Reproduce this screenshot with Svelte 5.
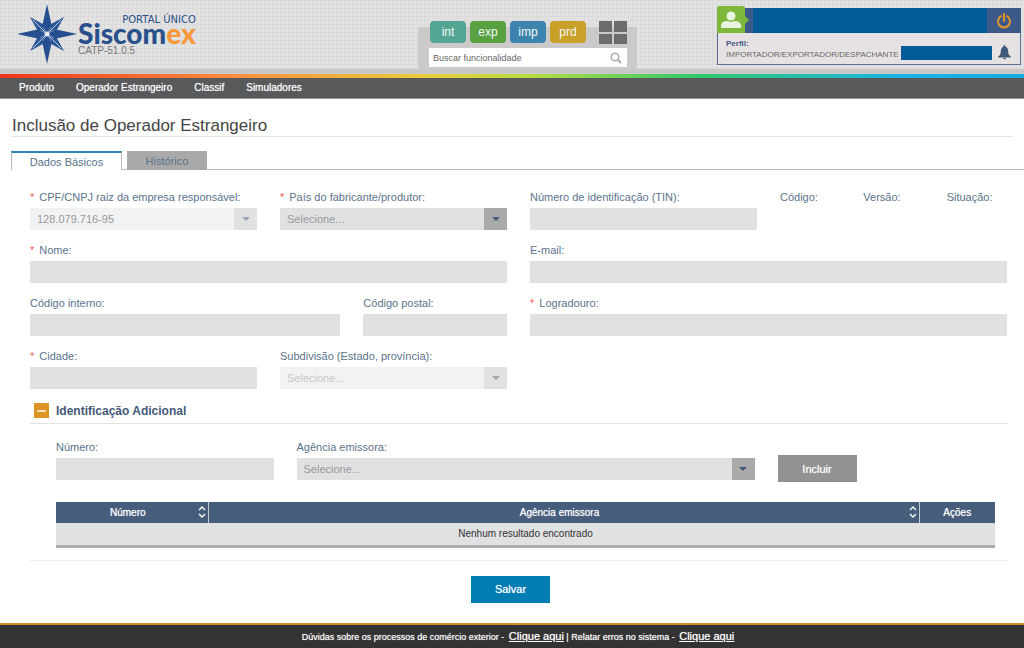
<script lang="ts">
  type Field = {
    id: string;
    label: string;
    span: number;
    required?: boolean;
    kind?: 'text' | 'select' | 'output';
    value?: string;
    disabled?: boolean;
  };

  const menu = ['Produto', 'Operador Estrangeiro', 'Classif', 'Simuladores'];
  const modules = ['int', 'exp', 'imp', 'prd'];

  const fields: Field[] = [
    {
      id: 'cpf-cnpj',
      label: 'CPF/CNPJ raiz da empresa responsável:',
      span: 3,
      required: true,
      kind: 'select',
      value: '128.079.716-95',
      disabled: true,
    },
    { id: 'pais', label: 'País do fabricante/produtor:', span: 3, required: true, kind: 'select' },
    { id: 'tin', label: 'Número de identificação (TIN):', span: 3 },
    { id: 'codigo', label: 'Código:', span: 1, kind: 'output' },
    { id: 'versao', label: 'Versão:', span: 1, kind: 'output' },
    { id: 'situacao', label: 'Situação:', span: 1, kind: 'output' },
    { id: 'nome', label: 'Nome:', span: 6, required: true },
    { id: 'email', label: 'E-mail:', span: 6 },
    { id: 'codigo-interno', label: 'Código interno:', span: 4 },
    { id: 'codigo-postal', label: 'Código postal:', span: 2 },
    { id: 'logradouro', label: 'Logradouro:', span: 6, required: true },
    { id: 'cidade', label: 'Cidade:', span: 3, required: true },
    {
      id: 'subdivisao',
      label: 'Subdivisão (Estado, província):',
      span: 3,
      kind: 'select',
      disabled: true,
    },
  ];

  const extraFields: Field[] = [
    { id: 'numero', label: 'Número:', span: 3 },
    { id: 'agencia', label: 'Agência emissora:', span: 6, kind: 'select' },
  ];

  let expanded = $state(true);
</script>

{#snippet formField(field: Field)}
  <div class="field span-{field.span}">
    <label for={field.id}>
      {#if field.required}<span class="required">*</span>{/if}{field.label}
    </label>
    {#if field.kind === 'select'}
      <div class="select" class:disabled={field.disabled}>
        <select id={field.id} disabled={field.disabled}>
          <option>{field.value ?? 'Selecione...'}</option>
        </select>
        <span class="arrow"></span>
      </div>
    {:else if field.kind === 'output'}
      <output id={field.id}></output>
    {:else}
      <input id={field.id} type="text" />
    {/if}
  </div>
{/snippet}

{#snippet sortIcon()}
  <svg class="sort" viewBox="0 0 8 14" width="8" height="14" aria-hidden="true">
    <path d="M1 5 4 2l3 3M1 9l3 3 3-3" fill="none" stroke="currentColor" stroke-width="1.4" />
  </svg>
{/snippet}

<div class="page">
  <header>
    <div class="brand">
      <svg class="star" viewBox="-29 -30 58 60" width="58" height="60" aria-hidden="true">
        <g>
          {#each [45, 135, 225, 315] as angle}
            <g transform="rotate({angle})">
              <path d="M0-24-5-7 0 0 5-7Z" fill="#2c5798" />
              <path d="M0-20V-3" stroke="#c3cfe0" stroke-width=".9" />
            </g>
          {/each}
        </g>
        <g>
          {#each [0, 90, 180, 270] as angle}
            <g transform="rotate({angle})">
              <path d="M0-30-5-7 0 0 5-7Z" fill="#264f90" />
              <path d="M-4-7 0 0 4-7" fill="none" stroke="#cfd8e6" stroke-width=".5" />
            </g>
          {/each}
        </g>
        <circle r="2.5" fill="#e6ebf2" />
      </svg>
      <div class="wordmark">
        <span class="portal">PORTAL ÚNICO</span>
        <span class="name">Siscom<em>ex</em></span>
        <span class="version">CATP-51.0.5</span>
      </div>
    </div>

    <div class="finder">
      <div class="modules">
        {#each modules as name}
          <button type="button" class="module {name}">{name}</button>
        {/each}
        <button type="button" class="tiles" aria-label="Todos os módulos">
          <svg viewBox="0 0 28 23" width="28" height="23" aria-hidden="true">
            <path d="M0 0h13v11H0zM15 0h13v11H15zM0 13h13v10H0zM15 13h13v10H15z" fill="#6b6c6e" />
          </svg>
        </button>
      </div>
      <div class="search">
        <input type="search" placeholder="Buscar funcionalidade" aria-label="Buscar funcionalidade" />
        <svg viewBox="0 0 12 12" width="12" height="12" aria-hidden="true">
          <circle cx="5" cy="5" r="3.8" fill="none" stroke="#aaa" stroke-width="1.5" />
          <path d="m8 8 2.500 2.500" stroke="#aaa" stroke-width="1.8" stroke-linecap="round" />
        </svg>
      </div>
    </div>

    <div class="user">
      <div class="account">
        <span class="avatar">
          <svg viewBox="0 0 22 18" width="22" height="18" aria-hidden="true">
            <circle cx="11" cy="5" r="4.500" fill="#e9f3dd" />
            <path d="M1 17v-2q0-5 7-5 3 2 6 0 7 0 7 5v2Z" fill="#e9f3dd" />
          </svg>
        </span>
        <span class="mask"></span>
        <button type="button" class="power" aria-label="Sair">
          <svg viewBox="0 0 16 16" width="16" height="16" aria-hidden="true">
            <path
              d="M5 3.200a6 6 0 1 0 6 0M8 1v7"
              fill="none"
              stroke="#e0962c"
              stroke-width="2"
              stroke-linecap="round"
            />
          </svg>
        </button>
      </div>
      <div class="profile">
        <div>
          <strong>Perfil:</strong>
          <span>IMPORTADOR/EXPORTADOR/DESPACHANTE</span>
        </div>
        <span class="mask"></span>
        <svg class="bell" viewBox="0 0 14 16" width="13" height="15" aria-hidden="true">
          <path
            d="M7 0q1 0 1 1.600Q11 3 11 7q0 4 3 5.500V13.500H0V12.500Q3 11 3 7 3 3 6 1.600 6 0 7 0ZM5 14h4q-2 3-4 0Z"
            fill="#3f5877"
          />
        </svg>
      </div>
    </div>
  </header>

  <nav>
    {#each menu as item}
      <a href="#{item}">{item}</a>
    {/each}
  </nav>

  <main>
    <h1>Inclusão de Operador Estrangeiro</h1>

    <div class="tabs" role="tablist">
      <button type="button" role="tab" aria-selected="true" class="active">Dados Básicos</button>
      <button type="button" role="tab" aria-selected="false">Histórico</button>
    </div>

    <form>
      <div class="grid">
        {#each fields as field (field.id)}
          {@render formField(field)}
        {/each}
      </div>

      <section>
        <h2>
          <button
            type="button"
            class="toggle"
            aria-label="Identificação Adicional"
            aria-expanded={expanded}
            onclick={() => (expanded = !expanded)}
          ></button>
          Identificação Adicional
        </h2>

        {#if expanded}
          <div class="extra">
            <div class="grid">
              {#each extraFields as field (field.id)}
                {@render formField(field)}
              {/each}
              <button type="button" class="btn include">Incluir</button>
            </div>

            <table>
              <thead>
                <tr>
                  <th class="col-number">Número {@render sortIcon()}</th>
                  <th>Agência emissora {@render sortIcon()}</th>
                  <th class="col-actions">Ações</th>
                </tr>
              </thead>
              <tbody>
                <tr>
                  <td colspan="3">Nenhum resultado encontrado</td>
                </tr>
              </tbody>
            </table>
          </div>
        {/if}
      </section>

      <div class="actions">
        <button type="button" class="btn save">Salvar</button>
      </div>
    </form>
  </main>

  <footer>
    Dúvidas sobre os processos de comércio exterior -
    <a href="#duvidas">Clique aqui</a> | Relatar erros no sistema -
    <a href="#erros">Clique aqui</a>
  </footer>
</div>

<style>
  :global(body) {
    background: #fff;
  }

  .page {
    display: flex;
    flex-direction: column;
    min-height: 100vh;
    font-family: 'Liberation Sans', Arial, sans-serif;
    font-size: 11px;
    color: #5b738c;
  }

  .page * {
    box-sizing: border-box;
  }

  button,
  input,
  select {
    margin: 0;
    padding: 0;
    border: 0;
    border-radius: 0;
    font: inherit;
    color: inherit;
  }

  button {
    cursor: pointer;
  }

  svg {
    display: block;
  }

  /* Header */
  header {
    display: flex;
    align-items: flex-start;
    height: 74px;
    padding: 0 3px 0 18px;
    border-bottom: 5px solid #c9c7c8;
    background-color: #e3e3e3;
    background-image:
      linear-gradient(#dadada 1px, transparent 1px),
      linear-gradient(90deg, #dadada 1px, transparent 1px);
    background-size: 4px 4px;
  }

  .brand {
    display: flex;
    gap: 2px;
    padding-top: 4px;
  }

  .wordmark {
    display: flex;
    flex-direction: column;
    padding-top: 11px;
    color: #28508c;
  }

  .portal {
    align-self: flex-end;
    font-family: 'DejaVu Sans', sans-serif;
    font-size: 10px;
    line-height: 9px;
  }

  .name {
    font-family: Lato, sans-serif;
    font-size: 28px;
    font-weight: 900;
    line-height: 18px;
  }

  .name em {
    font-style: normal;
    color: #f7993a;
  }

  .version {
    font-size: 10px;
    line-height: 18px;
    color: #777;
  }

  .finder {
    width: 219px;
    height: 42px;
    margin: 27px 80px 0 auto;
    padding: 0 10px 0 11px;
    background: #cbc9ca;
  }

  .modules {
    display: flex;
    gap: 4px;
    margin: -6px 0 4px 1px;
  }

  .module {
    width: 36px;
    height: 22px;
    border-radius: 4px;
    font-size: 12px;
    color: #f4f8f6;
  }

  .int {
    background: #52a693;
  }

  .exp {
    background: #57a143;
  }

  .imp {
    background: #3c84ad;
  }

  .prd {
    background: #c9a028;
  }

  .tiles {
    margin-left: auto;
    background: none;
  }

  .search {
    display: flex;
    align-items: center;
    height: 19px;
    padding: 0 5px 0 4px;
    background: #fff;
  }

  .search input {
    flex: 1;
    min-width: 0;
    background: none;
    font-size: 9px;
    color: #555;
    appearance: none;
  }

  .search input::placeholder {
    color: #666;
  }

  .user {
    width: 304px;
    margin-top: 8px;
    border: 1px solid #5d7097;
    background: #e6e2e4;
  }

  .account {
    display: flex;
    height: 25px;
    margin: -1px -1px 0;
    background: #3c5988;
  }

  .avatar {
    position: relative;
    display: flex;
    align-items: center;
    justify-content: center;
    width: 28px;
    height: 27px;
    margin: -2px 8px 0 0;
    border-radius: 2px 2px 0 0;
    background: #7db83c;
  }

  .avatar::after {
    content: '';
    position: absolute;
    top: 10px;
    left: 100%;
    border: 4px solid transparent;
    border-left-color: #7db83c;
    border-right: 0;
  }

  .mask {
    background: #005b98;
  }

  .account .mask {
    flex: 1;
  }

  .power {
    display: flex;
    align-items: center;
    justify-content: center;
    width: 34px;
    background: none;
  }

  .profile {
    display: flex;
    align-items: flex-end;
    gap: 2px;
    height: 31px;
    padding: 0 9px 4px 8px;
    font-size: 8px;
    line-height: 11px;
  }

  .profile div {
    display: flex;
    flex-direction: column;
  }

  .profile strong {
    color: #3c5988;
  }

  .profile span {
    color: #666;
  }

  .profile .mask {
    flex: 1;
    height: 14px;
  }

  .bell {
    margin-left: 4px;
  }

  nav {
    display: flex;
    gap: 22px;
    padding: 0 19px;
    border-top: 4px solid;
    border-image: linear-gradient(90deg, #f0341a, #f98a3c 22%, #e8cf3c 42%, #b5dc40 52%, #2fc96b 68%, #1bb3e6 88%, #16abe0) 1;
    background: #58595b;
    font-size: 10px;
    line-height: 20px;
  }

  nav a {
    color: #fff;
    text-decoration: none;
  }

  nav,
  th,
  .btn,
  footer {
    text-shadow: 0 0 1px rgb(255 255 255 / 0.7);
  }

  /* Content */
  main {
    flex: 1;
    border-top: 1px solid #999;
  }

  h1 {
    margin: 16px 12px 14px;
    border-bottom: 1px solid #e2e2e2;
    font-size: 17px;
    font-weight: normal;
    line-height: 21px;
    color: #444;
  }

  .tabs {
    display: flex;
    padding-left: 11px;
    background: linear-gradient(#bbb, #bbb) bottom / 100% 1px no-repeat;
    background-position: 122px bottom;
  }

  .tabs button {
    width: 80px;
    height: 19px;
    margin-left: 5px;
    background: #a9a9a9;
  }

  .tabs .active {
    width: 111px;
    margin-left: 0;
    border: 1px solid #bbb;
    border-top: 2px solid #2b86b3;
    border-bottom: 0;
    background: #fff;
  }

  form {
    padding: 16px 17px 20px 30px;
  }

  .grid {
    display: grid;
    grid-template-columns: repeat(12, minmax(0, 1fr));
    gap: 9px 23px;
  }

  .span-1 {
    grid-column: span 1;
  }

  .span-2 {
    grid-column: span 2;
  }

  .span-3 {
    grid-column: span 3;
  }

  .span-4 {
    grid-column: span 4;
  }

  .span-6 {
    grid-column: span 6;
  }

  .field label {
    display: block;
    line-height: 22px;
    white-space: nowrap;
  }

  .required {
    margin-right: 5px;
    color: #f0605c;
  }

  .field input,
  .select {
    display: block;
    width: 100%;
    height: 22px;
    background: #e0e1e3;
  }

  .field input {
    padding: 0 7px;
  }

  .select {
    position: relative;
  }

  .select select {
    width: 100%;
    height: 100%;
    padding: 0 30px 0 7px;
    background: none;
    color: #999;
    opacity: 1;
    appearance: none;
  }

  .arrow {
    position: absolute;
    inset: 0 0 0 auto;
    display: flex;
    align-items: center;
    justify-content: center;
    width: 23px;
    background: #a9a9a9;
    pointer-events: none;
  }

  .arrow::after {
    content: '';
    border: 4px solid transparent;
    border-top-color: #43597a;
    border-bottom: 0;
  }

  .select.disabled {
    background: #f1f2f3;
  }

  .select.disabled .arrow {
    background: #e1e1e1;
  }

  .select.disabled .arrow::after {
    border-top-color: #9aa5b5;
  }

  #subdivisao {
    color: #c8c8c8;
  }

  h2 {
    display: flex;
    align-items: center;
    gap: 7px;
    height: 26px;
    margin: 9px 0 12px;
    padding-left: 4px;
    border-bottom: 1px solid #e2e2e2;
    font-size: 12px;
    color: #43597a;
  }

  .toggle {
    display: flex;
    align-items: center;
    justify-content: center;
    width: 15px;
    height: 15px;
    background: #dc9424;
  }

  .toggle::after {
    content: '';
    width: 9px;
    height: 2px;
    background: #f6dfb8;
  }

  .extra {
    padding: 0 12px 12px 26px;
    border-bottom: 1px solid #ececec;
  }

  .btn {
    width: 79px;
    height: 27px;
    font-size: 11px;
    color: #fff;
  }

  .include {
    align-self: end;
    margin-bottom: -2px;
    background: #919294;
  }

  .save {
    background: #007db3;
  }

  table {
    width: 100%;
    margin-top: 22px;
    border-collapse: collapse;
    table-layout: fixed;
    border-bottom: 3px solid #aaacab;
    background: #e0e1e3;
    font-size: 10px;
    color: #333;
  }

  th {
    position: relative;
    height: 21px;
    padding: 0 16px 0 8px;
    border-left: 1px solid #c5ccd6;
    background: #465d7c;
    font-weight: normal;
    color: #fff;
  }

  th:first-child {
    border-left: 0;
  }

  .col-number {
    width: 152px;
  }

  .col-actions {
    width: 76px;
    padding: 0;
  }

  .sort {
    position: absolute;
    top: 3px;
    right: 2px;
  }

  td {
    height: 23px;
    padding: 0;
    text-align: center;
  }

  .actions {
    display: flex;
    justify-content: center;
    margin: 15px 16px 0 0;
  }

  footer {
    padding-left: 12px;
    border-top: 2px solid #d18b24;
    background: #333;
    font-size: 9px;
    line-height: 23px;
    text-align: center;
    color: #fff;
  }

  footer a {
    margin-left: 2px;
    font-size: 11px;
    color: #fff;
  }
</style>
